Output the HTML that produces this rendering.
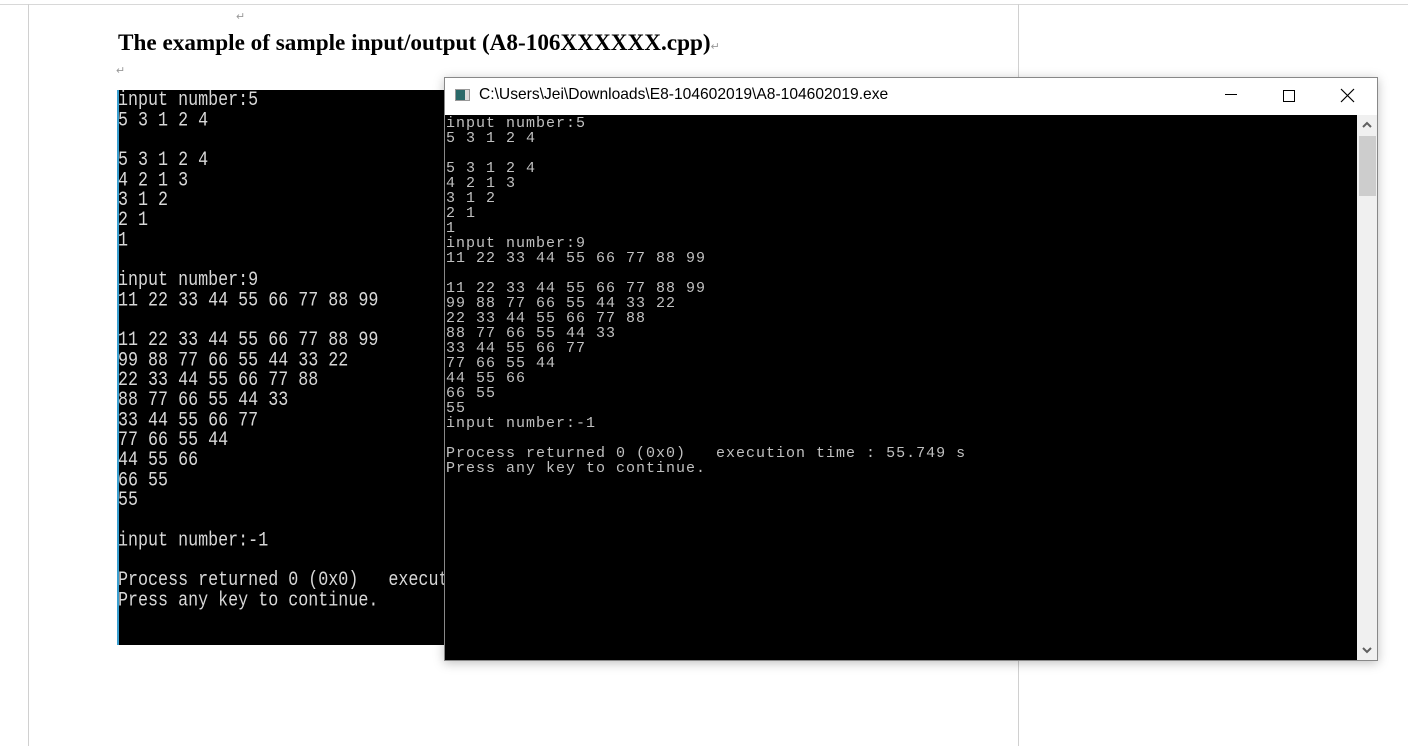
<!DOCTYPE html>
<html><head><style>
body{margin:0;width:1408px;height:746px;background:#fff;position:relative;overflow:hidden;font-family:"Liberation Sans",sans-serif}
.a{position:absolute}
pre{margin:0;position:absolute;font-family:"Liberation Mono",monospace;color:#c0c0c0;white-space:pre;transform-origin:0 0}
</style></head><body>
<div class="a" style="left:0;top:4px;width:1408px;height:1px;background:#d8d8d8"></div>
<div class="a" style="left:28px;top:4px;width:1px;height:742px;background:#d0d0d0"></div>
<div class="a" style="left:1018px;top:4px;width:1px;height:742px;background:#d0d0d0"></div>
<div class="a" style="left:236px;top:10px;font-size:11px;color:#999">↵</div>
<div class="a" style="left:118px;top:30px;font-family:'Liberation Serif',serif;font-weight:bold;font-size:23.2px;color:#000;white-space:nowrap">The example of sample input/output (A8-106XXXXXX.cpp)<span style="font-size:11px;color:#999;font-weight:normal">↵</span></div>
<div class="a" style="left:116px;top:64px;font-size:11px;color:#999">↵</div>
<div class="a" style="left:117px;top:90px;width:330px;height:555px;background:#000;border-left:2px solid #3a9fd0;box-sizing:border-box"></div>
<pre style="left:118px;top:92px;font-size:16.7px;line-height:16.67px;color:#d8d8d8;transform:scaleY(1.2)">input number:5
5 3 1 2 4

5 3 1 2 4
4 2 1 3
3 1 2
2 1
1

input number:9
11 22 33 44 55 66 77 88 99

11 22 33 44 55 66 77 88 99
99 88 77 66 55 44 33 22
22 33 44 55 66 77 88
88 77 66 55 44 33
33 44 55 66 77
77 66 55 44
44 55 66
66 55
55

input number:-1

Process returned 0 (0x0)   execut
Press any key to continue.</pre>
<div class="a" style="left:444px;top:77px;width:934px;height:584px;background:#fff;border:1px solid #888;box-sizing:border-box;box-shadow:0 2px 10px rgba(0,0,0,.25)"></div>
<div class="a" style="left:455px;top:89px;width:15px;height:12px;border:1px solid #999;background:linear-gradient(90deg,#2a6a6a 70%,#ddd 70%);box-sizing:border-box"></div>
<div class="a" style="left:479px;top:86px;font-size:15.6px;color:#000;white-space:nowrap">C:\Users\Jei\Downloads\E8-104602019\A8-104602019.exe</div>
<div class="a" style="left:1225px;top:94px;width:12px;height:1px;background:#000"></div>
<div class="a" style="left:1283px;top:90px;width:12px;height:12px;border:1px solid #000;box-sizing:border-box"></div>
<svg class="a" style="left:1340px;top:88px" width="15" height="15"><path d="M1 1L14 14M14 1L1 14" stroke="#000" stroke-width="1.2"/></svg>
<div class="a" style="left:445px;top:115px;width:912px;height:545px;background:#000"></div>
<div class="a" style="left:1357px;top:115px;width:20px;height:545px;background:#f0f0f0"></div>
<div class="a" style="left:1359px;top:136px;width:17px;height:60px;background:#cdcdcd"></div>
<svg class="a" style="left:1361px;top:120px" width="12" height="10"><path d="M2 7L6 3L10 7" stroke="#606060" stroke-width="2" fill="none"/></svg>
<svg class="a" style="left:1361px;top:645px" width="12" height="10"><path d="M2 3L6 7L10 3" stroke="#606060" stroke-width="2" fill="none"/></svg>
<pre style="left:446px;top:116px;font-size:15px;line-height:15px;letter-spacing:1px">input number:5
5 3 1 2 4

5 3 1 2 4
4 2 1 3
3 1 2
2 1
1
input number:9
11 22 33 44 55 66 77 88 99

11 22 33 44 55 66 77 88 99
99 88 77 66 55 44 33 22
22 33 44 55 66 77 88
88 77 66 55 44 33
33 44 55 66 77
77 66 55 44
44 55 66
66 55
55
input number:-1

Process returned 0 (0x0)   execution time : 55.749 s
Press any key to continue.</pre>
</body></html>
